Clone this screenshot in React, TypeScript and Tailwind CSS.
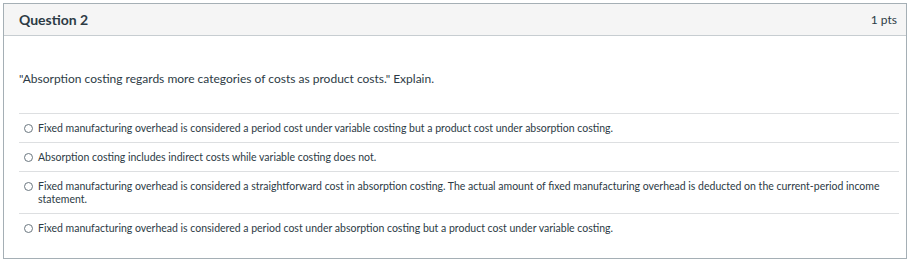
const answers = [
  'Fixed manufacturing overhead is considered a period cost under variable costing but a product cost under absorption costing.',
  'Absorption costing includes indirect costs while variable costing does not.',
  'Fixed manufacturing overhead is considered a straightforward cost in absorption costing. The actual amount of fixed manufacturing overhead is deducted on the current-period income statement.',
  'Fixed manufacturing overhead is considered a period cost under absorption costing but a product cost under variable costing.',
];

const App: React.FC = () => {
  return (
    <div className="w-[909px] h-[262px] bg-white pt-[3px] pl-[3px] font-['Lato',sans-serif] text-[#2d3b45]">
      <div className="w-[904px] h-[256px] border border-[#a5afb5]">
        {/* header */}
        <div className="h-[32px] bg-[#f5f5f5] border-b border-[#c7cdd1] flex items-center justify-between pl-[15px] pr-[9px]">
          <span className="text-[14px] font-bold">Question 2</span>
          <span className="text-[12px]">1 pts</span>
        </div>

        <div className="pl-[15px] pr-[7px]">
          <p className="text-[12px] pt-[35px] leading-[16px]">
            "Absorption costing regards more categories of costs as product costs." Explain.
          </p>

          <div className="mt-[26px]">
            {answers.map((a, i) => (
              <div key={i} className="flex items-start gap-[5px] border-t border-[#dddfe1] pl-[5px] pr-[12px] pt-[8px] pb-[7px]">
                <span className="mt-[2px] w-[9px] h-[9px] shrink-0 rounded-full border border-[#6b7780]" />
                <span className="text-[10.5px] leading-[13px]">{a}</span>
              </div>
            ))}
          </div>
        </div>
      </div>
    </div>
  );
};

export default App;
